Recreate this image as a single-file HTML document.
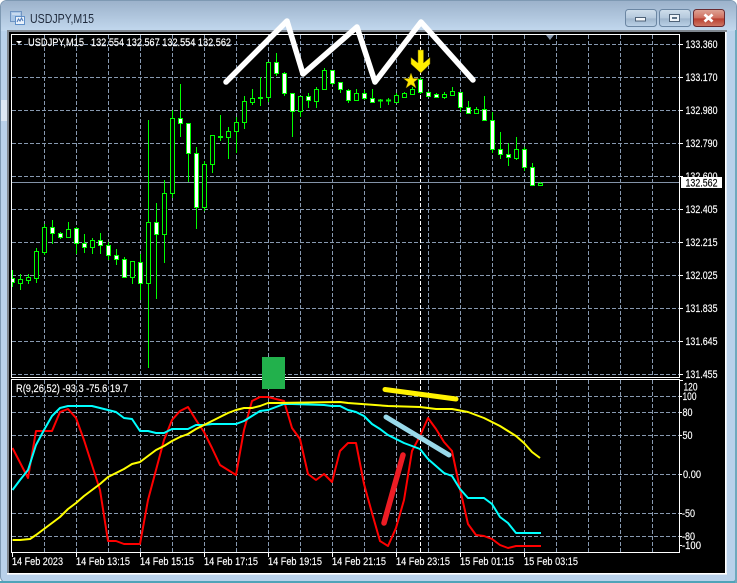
<!DOCTYPE html>
<html>
<head>
<meta charset="utf-8">
<title>USDJPY,M15</title>
<style>
html,body{margin:0;padding:0;background:#fff;width:737px;height:583px;overflow:hidden}
svg{display:block}
text{font-family:"Liberation Sans",sans-serif;font-size:11px;fill:#fff;stroke:#fff;stroke-width:.15px}
</style>
</head>
<body>
<svg width="737" height="583" viewBox="0 0 737 583" xmlns="http://www.w3.org/2000/svg">
<defs>
<linearGradient id="tb" x1="0" y1="0" x2="0" y2="1"><stop offset="0" stop-color="#9cb2cb"/><stop offset="1" stop-color="#c2d8ee"/></linearGradient>
<linearGradient id="btn" x1="0" y1="0" x2="0" y2="1"><stop offset="0" stop-color="#cfdeec"/><stop offset=".5" stop-color="#b4c8dc"/><stop offset=".55" stop-color="#9fb6cd"/><stop offset="1" stop-color="#bcd2e8"/></linearGradient>
<linearGradient id="cl" x1="0" y1="0" x2="0" y2="1"><stop offset="0" stop-color="#dfa597"/><stop offset=".5" stop-color="#cf6f5f"/><stop offset=".55" stop-color="#b93f30"/><stop offset="1" stop-color="#cf7a68"/></linearGradient>
<clipPath id="main"><rect x="12" y="35" width="667" height="342"/></clipPath>
<clipPath id="ind"><rect x="12" y="380" width="667" height="172"/></clipPath>
</defs>

<!-- window frame -->
<rect x="0" y="0" width="737" height="583" fill="#fff"/>
<rect x="0.5" y="0.5" width="736" height="582" rx="6" fill="#b9d1ea" stroke="#7e99b3"/>
<path d="M1 31V7Q1 1 7 1H730Q736 1 736 7V31Z" fill="url(#tb)"/>
<rect x="0" y="581" width="737" height="2" fill="#4fa3b8"/>
<rect x="735" y="30" width="2" height="553" fill="#6fa9bd"/>
<rect x="1" y="100" width="6" height="21" fill="#dde8f4"/>
<rect x="7" y="30" width="720" height="2" fill="#7f868e"/>
<rect x="7" y="30" width="2" height="544" fill="#7f868e"/>
<rect x="9" y="32" width="716" height="541" fill="#000"/>
<rect x="7" y="573" width="720" height="1.6" fill="#fff"/>
<rect x="725" y="32" width="1.6" height="542" fill="#fff"/>

<!-- title -->
<g>
<rect x="10.500" y="11.500" width="11" height="10" fill="#a9c6e6" stroke="#6f94c2"/>
<rect x="15.500" y="16.500" width="9" height="8" fill="#eaf2fb" stroke="#5f8fc8"/>
<path d="M17 22l1.500-3 1.500 2 1.500-3 1.500 3" fill="none" stroke="#4a78b8"/>
<path d="M12 14h8" stroke="#e6eef8"/>
</g>
<text x="30" y="23" textLength="64" lengthAdjust="spacingAndGlyphs" style="font-size:12.5px;fill:#1f2a3c;stroke:none">USDJPY,M15</text>

<!-- buttons -->
<rect x="625.500" y="9.500" width="31" height="17" rx="3" fill="url(#btn)" stroke="#6b86a3"/>
<rect x="635.500" y="17.500" width="10" height="3.500" fill="#f2f6fa" stroke="#4e6278"/>
<rect x="659.500" y="9.500" width="31" height="17" rx="3" fill="url(#btn)" stroke="#6b86a3"/>
<rect x="669.500" y="14.500" width="10" height="7" fill="#eef3f8" stroke="#4e6278"/>
<rect x="672" y="17" width="5" height="2" fill="#5d7186"/>
<rect x="693.500" y="9.500" width="31" height="17" rx="3" fill="url(#cl)" stroke="#6a2a30"/>
<path d="M704.500 14.500l8 7M712.500 14.500l-8 7" stroke="#fff" stroke-width="2.800" fill="none"/>

<!-- grid -->
<g stroke="#8799b0" stroke-width="1" stroke-dasharray="4 2" fill="none" shape-rendering="crispEdges">
<path d="M12 44.500H679M12 77.500H679M12 110.500H679M12 143.500H679M12 176.500H679M12 209.500H679M12 242.500H679M12 275.500H679M12 308.500H679M12 341.500H679M12 374.500H679"/>
<path d="M44.500 35V377M76.500 35V377M108.500 35V377M140.500 35V377M172.500 35V377M204.500 35V377M236.500 35V377M268.500 35V377M300.500 35V377M332.500 35V377M364.500 35V377M396.500 35V377M428.500 35V377M460.500 35V377M492.500 35V377M524.500 35V377M556.500 35V377M588.500 35V377M620.500 35V377M652.500 35V377"/>
<path d="M12 396.500H679M12 412.500H679M12 435.500H679M12 474.500H679M12 513.500H679M12 536.500H679"/>
<path d="M44.500 380V552M76.500 380V552M108.500 380V552M140.500 380V552M172.500 380V552M204.500 380V552M236.500 380V552M268.500 380V552M300.500 380V552M332.500 380V552M364.500 380V552M396.500 380V552M428.500 380V552M460.500 380V552M492.500 380V552M524.500 380V552M556.500 380V552M588.500 380V552M620.500 380V552M652.500 380V552"/>
</g>
<path d="M420.500 35V377M420.500 380V552" stroke="#fff" stroke-dasharray="4 2" fill="none" shape-rendering="crispEdges"/>
<path d="M12 182.500H679" stroke="#8393a8" shape-rendering="crispEdges"/>

<!-- candles -->
<g clip-path="url(#main)" shape-rendering="crispEdges">
<path stroke="#0f0" fill="none" d="M12.500 270V287M20.500 274V290M28.500 274V284M36.500 248V283M44.500 224V255M52.500 220V244M60.500 232V239M68.500 222V237M76.500 227V254M84.500 234V253M92.500 238V254M100.500 233V254M108.500 242V260M116.500 249V265M124.500 257V278M132.500 261V284M140.500 254V300M148.500 120V368M156.500 203V299M164.500 180V263M172.500 110V198M180.500 84V137M188.500 123V182M196.500 147V229M204.500 161V211M212.500 135V173M220.500 115V141M228.500 127V159M236.500 117V153M244.500 96V129M252.500 89V105M260.500 77V106M268.500 62V102M276.500 53V76M284.500 72V96M292.500 93V137M300.500 96V117M308.500 93V108M316.500 87V108M324.500 68V90M332.500 70V85M340.500 82V93M348.500 89V103M356.500 89V100M364.500 90V100M372.500 89V103M380.500 99V108M388.500 98V105M396.500 93V103M404.500 92V97M412.500 87V95M420.500 77V94M428.500 91V97M436.500 93V98M444.500 92V99M452.500 87V95M460.500 92V112M468.500 101V114M476.500 107V114M484.500 96V121M492.500 112V153M500.500 132V159M508.500 143V166M516.500 137V160M524.500 147V171M532.500 163V186M540.500 182V185"/>
<path stroke="#0f0" fill="#000" d="M18.500 279.500h4v4h-4zM26.500 277.500h4v3h-4zM34.500 251.500h4v27h-4zM42.500 227.500h4v25h-4zM66.500 229.500h4v8h-4zM90.500 240.500h4v7h-4zM130.500 261.500h4v16h-4zM146.500 222.500h4v61h-4zM162.500 193.500h4v41h-4zM170.500 118.500h4v75h-4zM202.500 164.500h4v43h-4zM210.500 135.500h4v29h-4zM226.500 131.500h4v6h-4zM234.500 122.500h4v9h-4zM242.500 101.500h4v21h-4zM250.500 98.500h4v4h-4zM266.500 62.500h4v35h-4zM298.500 96.500h4v15h-4zM314.500 89.500h4v12h-4zM322.500 70.500h4v19h-4zM354.500 93.500h4v7h-4zM394.500 95.500h4v7h-4zM402.500 93.500h4v4h-4zM410.500 89.500h4v5h-4zM442.500 94.500h4v3h-4zM450.500 91.500h4v4h-4zM474.500 109.500h4v4h-4zM514.500 149.500h4v9h-4zM538.500 183.500h4v2h-4z"/>
<path stroke="#0f0" fill="#fff" d="M10.500 278.500h4v4h-4zM50.500 227.500h4v6h-4zM58.500 233.500h4v4h-4zM74.500 228.500h4v15h-4zM82.500 243.500h4v4h-4zM98.500 240.500h4v5h-4zM106.500 245.500h4v10h-4zM114.500 255.500h4v4h-4zM122.500 259.500h4v18h-4zM138.500 262.500h4v21h-4zM154.500 222.500h4v12h-4zM178.500 118.500h4v5h-4zM186.500 123.500h4v30h-4zM194.500 153.500h4v54h-4zM274.500 62.500h4v11h-4zM282.500 73.500h4v20h-4zM290.500 93.500h4v18h-4zM306.500 96.500h4v4h-4zM330.500 70.500h4v13h-4zM338.500 82.500h4v7h-4zM346.500 90.500h4v10h-4zM362.500 93.500h4v5h-4zM370.500 98.500h4v4h-4zM418.500 79.500h4v13h-4zM426.500 92.500h4v4h-4zM434.500 94.500h4v3h-4zM458.500 92.500h4v15h-4zM466.500 107.500h4v6h-4zM482.500 109.500h4v11h-4zM490.500 120.500h4v29h-4zM498.500 149.500h4v5h-4zM506.500 154.500h4v3h-4zM522.500 149.500h4v18h-4zM530.500 167.500h4v18h-4z"/>
<path stroke="#0f0" stroke-width="2" fill="none" d="M218 137h5M258 98h5M378 100.500h5M386 100.500h5"/>
</g>

<!-- frames -->
<g fill="none" stroke="#fff" shape-rendering="crispEdges">
<rect x="11.500" y="34.500" width="668" height="343"/>
<rect x="11.500" y="379.500" width="668" height="173"/>
<path d="M680 44.500h3M680 77.500h3M680 110.500h3M680 143.500h3M680 176.500h3M680 209.500h3M680 242.500h3M680 275.500h3M680 308.500h3M680 341.500h3M680 374.500h3"/>
<path d="M680 380.500h3M680 396.500h2M680 412.500h2M680 435.500h2M680 474.500h2M680 513.500h2M680 536.500h2M680 545.500h2"/>
<path d="M12.500 553v4M76.500 553v4M140.500 553v4M204.500 553v4M268.500 553v4M332.500 553v4M396.500 553v4M460.500 553v4M524.500 553v4"/>
</g>

<!-- shift marker + legend arrow -->
<path d="M546 35h8l-4 5z" fill="#8393a8"/>
<path d="M16 41h6l-3 3z" fill="#fff"/>
<text x="28" y="46" textLength="56" lengthAdjust="spacingAndGlyphs">USDJPY,M15</text>
<text x="91" y="46" textLength="140" lengthAdjust="spacingAndGlyphs">132.554 132.567 132.554 132.562</text>

<!-- price labels -->
<g>
<text x="685.500" y="48" textLength="32" lengthAdjust="spacingAndGlyphs">133.360</text>
<text x="685.500" y="81" textLength="32" lengthAdjust="spacingAndGlyphs">133.170</text>
<text x="685.500" y="114" textLength="32" lengthAdjust="spacingAndGlyphs">132.980</text>
<text x="685.500" y="147" textLength="32" lengthAdjust="spacingAndGlyphs">132.790</text>
<text x="685.500" y="180" textLength="32" lengthAdjust="spacingAndGlyphs">132.600</text>
<text x="685.500" y="213" textLength="32" lengthAdjust="spacingAndGlyphs">132.405</text>
<text x="685.500" y="246" textLength="32" lengthAdjust="spacingAndGlyphs">132.215</text>
<text x="685.500" y="279" textLength="32" lengthAdjust="spacingAndGlyphs">132.025</text>
<text x="685.500" y="312" textLength="32" lengthAdjust="spacingAndGlyphs">131.835</text>
<text x="685.500" y="345" textLength="32" lengthAdjust="spacingAndGlyphs">131.645</text>
<text x="685.500" y="378" textLength="32" lengthAdjust="spacingAndGlyphs">131.455</text>
</g>
<rect x="681" y="177" width="41" height="11" fill="#fff"/>
<text x="685.500" y="186.500" textLength="32" lengthAdjust="spacingAndGlyphs" style="fill:#000;stroke:#000">132.562</text>

<!-- indicator labels -->
<text x="683.500" y="390.500" textLength="14" lengthAdjust="spacingAndGlyphs">120</text>
<text x="682.500" y="400" textLength="14" lengthAdjust="spacingAndGlyphs">100</text>
<text x="682.500" y="416" textLength="10" lengthAdjust="spacingAndGlyphs">80</text>
<text x="682.500" y="439" textLength="10" lengthAdjust="spacingAndGlyphs">50</text>
<text x="683" y="478" textLength="18" lengthAdjust="spacingAndGlyphs">0.00</text>
<text x="682" y="517" textLength="13" lengthAdjust="spacingAndGlyphs">-50</text>
<text x="682" y="540" textLength="13" lengthAdjust="spacingAndGlyphs">-80</text>
<text x="682" y="549" textLength="19" lengthAdjust="spacingAndGlyphs">-100</text>
<text x="16" y="392" textLength="112" lengthAdjust="spacingAndGlyphs">R(9,26,52) -93.3 -75.6 19.7</text>

<!-- date labels -->
<text x="12" y="565" textLength="51" lengthAdjust="spacingAndGlyphs">14 Feb 2023</text>
<text x="76" y="565" textLength="54" lengthAdjust="spacingAndGlyphs">14 Feb 13:15</text>
<text x="140" y="565" textLength="54" lengthAdjust="spacingAndGlyphs">14 Feb 15:15</text>
<text x="204" y="565" textLength="54" lengthAdjust="spacingAndGlyphs">14 Feb 17:15</text>
<text x="268" y="565" textLength="54" lengthAdjust="spacingAndGlyphs">14 Feb 19:15</text>
<text x="332" y="565" textLength="54" lengthAdjust="spacingAndGlyphs">14 Feb 21:15</text>
<text x="396" y="565" textLength="54" lengthAdjust="spacingAndGlyphs">14 Feb 23:15</text>
<text x="460" y="565" textLength="54" lengthAdjust="spacingAndGlyphs">15 Feb 01:15</text>
<text x="524" y="565" textLength="54" lengthAdjust="spacingAndGlyphs">15 Feb 03:15</text>

<!-- indicator lines -->
<g clip-path="url(#ind)" fill="none" stroke-width="2" stroke-linejoin="round">
<polyline stroke="#f00" points="12.500,448 28,478 36,431 52,431 60,412 68,409 76,418 84,440 92,465 100,490 108,541 116,541 124,544 132,544 140,544 148,500 156,470 164,440 172,420 180,411 188,407 196,420 204,432 212,448 220,465 228,470 236,475 244,430 252,401 260,397 268,397 276,399 284,401 292,428 300,439 308,474 316,480 324,474 332,482 340,451 348,443 356,443 364,484 372,513 380,541 388,546 396,528 404,500 412,451 420,436 428,418 436,429 444,442 452,451 460,489 468,524 476,535 484,536 492,539 500,545 508,548 516,546 524,546 532,546 541,546"/>
<polyline stroke="#0ff" points="12.500,490 20,480 28,470 36,445 44,430 52,416 60,408 68,406 76,406 84,406 92,406 100,408 108,410 116,412 124,418 132,419 140,431 148,431 156,433 164,433 172,429 180,429 188,429 196,425 204,425 212,424 220,424 236,424 244,421 252,416 260,411 268,410 276,407 284,404 292,404 324,405 332,406 340,406 348,410 356,412 364,416 372,424 380,429 388,435 396,439 404,443 412,446 420,449 428,459 436,466 444,473 452,476 460,489 468,498 476,498 484,498 492,504 500,517 508,523 516,533 524,533 532,533 541,533"/>
<polyline stroke="#ff0" points="12.500,540 20,540 30,539 36,535 44,529 52,523 60,517 68,509 76,503 84,496 92,490 100,484 108,477 116,473 124,469 132,464 140,462 148,456 156,450 164,446 172,441 180,437 188,434 196,429 204,425 212,421 220,417 228,413 236,410 244,408 252,408 260,406 268,403 276,403 340,402 348,403 388,406 420,407 436,409 452,409 468,412 484,418 492,422 500,426 508,431 516,436 524,443 532,452 540,458"/>
</g>

<!-- drawings -->
<rect x="262" y="357" width="23" height="32" fill="#22b14c"/>
<polyline points="226,82 287,21 303,74 357,27 375,82 421,22 473,80" fill="none" stroke="#fff" stroke-width="5.500" stroke-linecap="round" stroke-linejoin="round"/>
<path d="M385 389.500L456 399" stroke="#fff200" stroke-width="5" stroke-linecap="round" fill="none"/>
<path d="M386 417L449 455" stroke="#99d9ea" stroke-width="5" stroke-linecap="round" fill="none"/>
<path d="M384 523L403 455" stroke="#ed1c24" stroke-width="5.500" stroke-linecap="round" fill="none"/>
<polygon points="411,73 413,78.500 418.500,78.500 414,82 416,88 411,84.500 406,88 408,82 403.500,78.500 409,78.500" fill="#ffe600" stroke="#8a7a00" stroke-width=".5"/>
<polygon points="418,50 423.500,50 423.500,63 430,57.500 430,64 420.800,73 411,64 411,57.500 418,63" fill="#ffee00" stroke="#7a6a00" stroke-width=".5"/>
</svg>
</body>
</html>
